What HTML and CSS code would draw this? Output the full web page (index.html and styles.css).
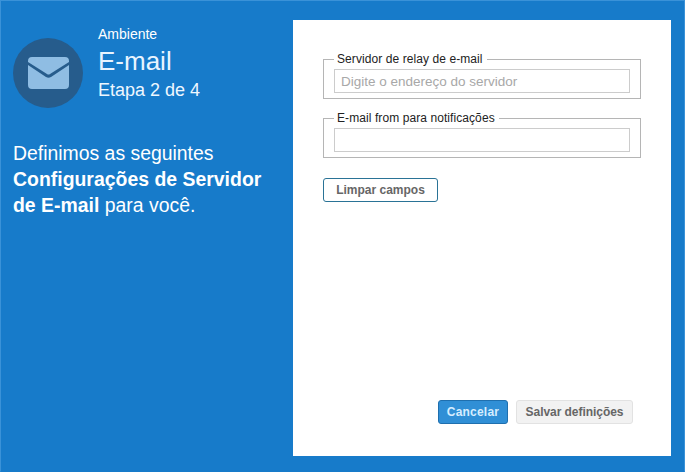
FILE: index.html
```html
<!DOCTYPE html>
<html lang="pt-BR">
<head>
<meta charset="utf-8">
<title>E-mail</title>
<link rel="stylesheet" href="styles.css">
</head>
<body>
<div class="wizard">
  <aside class="side">
    <div class="head">
      <div class="badge">
        <svg class="mail" viewBox="0 0 41 32" width="41" height="32" aria-hidden="true">
          <path class="mail-body" d="M4 0H37Q41 0 41 4V5L22 17Q20.500 18 19 17L0 5V4Q0 0 4 0Z"/>
          <path class="mail-body" d="M0 8L18 20Q20.500 21.500 23 20L41 8V28Q41 32 37 32H4Q0 32 0 28Z"/>
        </svg>
      </div>
      <div class="titles">
        <div class="crumb">Ambiente</div>
        <div class="title">E-mail</div>
        <div class="step">Etapa 2 de 4</div>
      </div>
    </div>
    <p class="intro">Definimos as seguintes <strong>Configurações de Servidor de E-mail</strong> para você.</p>
  </aside>
  <main class="panel">
    <form class="form">
      <fieldset class="group">
        <legend class="legend">Servidor de relay de e-mail</legend>
        <input class="field" type="text" placeholder="Digite o endereço do servidor">
      </fieldset>
      <fieldset class="group">
        <legend class="legend">E-mail from para notificações</legend>
        <input class="field" type="text">
      </fieldset>
      <button class="btn btn-clear" type="button">Limpar campos</button>
      <div class="actions">
        <button class="btn btn-primary" type="button">Cancelar</button>
        <button class="btn btn-disabled" type="button">Salvar definições</button>
      </div>
    </form>
  </main>
</div>
</body>
</html>
```
FILE: styles.css
```css
* { box-sizing: border-box; }
html, body { margin: 0; height: 100%; }
body { font-family: "Liberation Sans", Arial, sans-serif; background: #177ccb; }
.wizard {
  width: 685px; height: 472px; display: flex;
  background: #177bca;
  border: 1px solid #3a92d8; border-bottom-color: #177bca;
  padding: 19px 13px 15px 12px;
}
.side { width: 280px; color: #fff; flex: none; }
.head { display: flex; align-items: flex-start; }
.badge {
  width: 70px; height: 70px; border-radius: 50%; background: #265c8c;
  margin-top: 18px; flex: none; display: flex; align-items: center; justify-content: center;
}
.mail-body { fill: #8fbde3; }
.titles { margin-left: 15px; }
.crumb { font-size: 14px; line-height: 16px; margin-top: 6px; }
.title { font-size: 26px; line-height: 30px; margin-top: 4px; color: #e8f4ff; }
.step { font-size: 18px; line-height: 20px; margin-top: 4px; color: #eef7ff; }
.intro { margin: 32px 0 0; font-size: 19.4px; line-height: 26px; width: 262px; }
.intro strong { letter-spacing: .02px; }
.panel { flex: 1; background: #fff; padding: 32px 30px 32px 30px; }
.form { height: 100%; display: flex; flex-direction: column; align-items: flex-start; }
.group {
  width: 318px; margin: 0 0 12px; padding: 3px 10px 5px; border: 1px solid #b5b5b5; min-width: 0;
}
.legend { font-size: 12px; line-height: 14px; padding: 0 4px 0 3px; color: #222; letter-spacing: .08px; }
.field {
  display: block; width: 296px; height: 24px; border: 1px solid #ccc; padding: 0 6px;
  font: 13.5px "Liberation Sans", Arial, sans-serif; background: #fff;
}
.field::placeholder { color: #a8a8a8; opacity: 1; }
.btn {
  height: 24px; border-radius: 3px; font: bold 12px "Liberation Sans", Arial, sans-serif;
  padding: 0; cursor: pointer;
}
.btn-clear { width: 115px; margin-top: 8px; background: #fff; border: 1px solid #2a7396; color: #666; }
.actions { margin-top: auto; align-self: flex-end; margin-right: 8px; display: flex; gap: 8px; }
.btn-primary { width: 70px; background: #308fd6; border: 1px solid #1f6fae; color: #d6edff; letter-spacing: .2px; }
.btn-disabled { width: 117px; background: #f2f2f2; border: 1px solid #e2e2e2; color: #666; letter-spacing: -.05px; }
```
